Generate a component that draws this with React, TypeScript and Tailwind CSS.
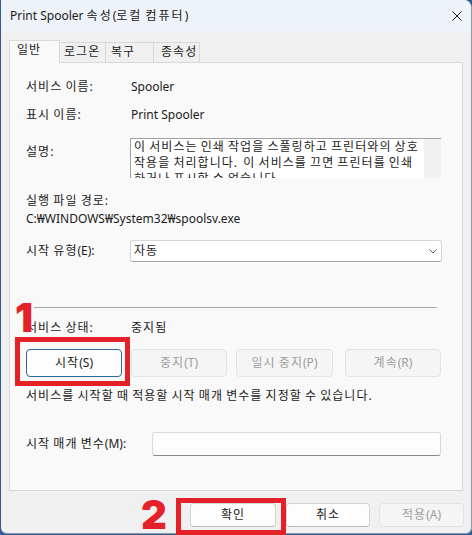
import React from "react";

const HANGUL = /([\uAC00-\uD7A3]+)/;

function K({ t, wide }: { t: string; wide?: boolean }) {
  const parts = t.split(HANGUL);
  return (
    <span>
      {parts.map((p, i) =>
        i % 2 === 1 ? (
          <span key={i} className={wide ? "tracking-[2px]" : "tracking-[1.05px]"}>
            {p}
          </span>
        ) : (
          <React.Fragment key={i}>{p}</React.Fragment>
        )
      )}
    </span>
  );
}

function Btn({ label, w, disabled, focused, className = "" }: { label: string; w: string; disabled?: boolean; focused?: boolean; className?: string }) {
  const base = "flex items-center justify-center rounded-[4px] border h-full whitespace-pre " + w + " " + className;
  let look = " bg-[#fdfdfd] border-[#d3d3d3] border-b-[#bcbcbc] text-[#1b1b1b]";
  if (disabled) look = " bg-[#f5f5f5] border-[#e3e3e3] text-[#9d9d9d]";
  if (focused) look = " bg-[#fdfdfd] border-[#2f6798] text-[#1b1b1b]";
  return (
    <div className={base + look}>
      <K t={label} />
    </div>
  );
}

export default function App() {
  return (
    <div className="relative w-[472px] h-[535px] bg-[#2c5d99] pl-[1px] [font-family:'Noto_Sans','Noto_Sans_CJK_KR',sans-serif] text-[12px] leading-[16px] text-[#1b1b1b]">
      <div className="w-[471px] h-[534px] bg-[#f0f0f0] rounded-tr-[8px] rounded-b-[6px] border-r border-b border-[#8d99aa] overflow-hidden flex flex-col">
        {/* Title bar */}
        <div className="h-[31px] shrink-0 bg-[#eef3f9] flex items-center justify-between pl-[9px] pr-[9px]">
          <span className="text-[#1a1a1a]">
            <K t="Print Spooler 속성(로컬 컴퓨터)" wide />
          </span>
          <svg width="10" height="10" viewBox="0 0 10 10" className="mt-[1px]">
            <path d="M0.5 0.5 L9.5 9.5 M9.5 0.5 L0.5 9.5" stroke="#1a1a1a" strokeWidth="1" fill="none" />
          </svg>
        </div>

        {/* Tabs */}
        <div className="relative z-10 mt-[9px] ml-[8px] flex items-end h-[22px]">
          <div className="h-[23px] -mb-px w-[51px] bg-[#f9f9f9] border-t border-l border-r border-[#d9d9d9] pl-[7px] pt-[1px]"><K t="일반" /></div>
          <div className="h-[20px] w-[46px] border-t border-r border-[#d9d9d9] pl-[4px] pt-[1px]"><K t="로그온" /></div>
          <div className="h-[20px] w-[48px] border-t border-r border-[#d9d9d9] pl-[5px] pt-[1px]"><K t="복구" /></div>
          <div className="h-[20px] w-[46px] border-t border-r border-[#d9d9d9] pl-[7px] pt-[1px]"><K t="종속성" /></div>
        </div>

        {/* Panel */}
        <div className="ml-[8px] w-[454px] h-[429px] shrink-0 bg-[#f9f9f9] border border-[#d9d9d9] pl-[16px] flex flex-col">
          <div className="mt-[16px] flex">
            <div className="w-[105px]"><K t="서비스 이름:" /></div>
            <div>Spooler</div>
          </div>
          <div className="mt-[12px] flex">
            <div className="w-[105px]"><K t="표시 이름:" /></div>
            <div>Print Spooler</div>
          </div>
          <div className="mt-[15px] flex">
            <div className="w-[104px] pt-[6px]"><K t="설명:" /></div>
            <div className="w-[311px] h-[40px] flex border-t border-l border-[#a0a0a0] overflow-hidden">
              <div className="flex-1 bg-white pl-[3px] whitespace-pre overflow-hidden">
                <div><K t="이 서비스는 인쇄 작업을 스풀링하고 프린터와의 상호" /></div>
                <div><K t="작용을 처리합니다.  이 서비스를 끄면 프린터를 인쇄" /></div>
                <div><K t="하거나 표시할 수 없습니다." /></div>
              </div>
              <div className="w-[17px] bg-[#f0f0f0]" />
            </div>
          </div>
          <div className="mt-[15px]"><K t="실행 파일 경로:" /></div>
          <div className="mt-[2px]">C:₩WINDOWS₩System32₩spoolsv.exe</div>
          <div className="mt-[13px] flex items-center h-[22px]">
            <div className="w-[104px]"><K t="시작 유형(E):" /></div>
            <div className="w-[312px] h-[22px] bg-white border border-[#d6d6d6] border-b-[#a8a8a8] rounded-[3px] flex items-center justify-between pl-[3px] pr-[4px]">
              <K t="자동" />
              <svg width="8" height="5" viewBox="0 0 8 5">
                <path d="M0.5 0.5 L4 4 L7.5 0.5" stroke="#555" strokeWidth="1" fill="none" />
              </svg>
            </div>
          </div>
          <div className="mt-[45px] ml-[8px] w-[403px] h-px bg-[#a8a8a8]" />
          <div className="mt-[12px] flex">
            <div className="w-[105px]"><K t="서비스 상태:" /></div>
            <div><K t="중지됨" /></div>
          </div>
          <div className="mt-[13px] flex h-[28px]">
            <Btn label="시작(S)" w="w-[96px]" focused />
            <Btn label="중지(T)" w="w-[96px]" disabled className="ml-[9px]" />
            <Btn label="일시 중지(P)" w="w-[97px]" disabled className="ml-[9px]" />
            <Btn label="계속(R)" w="w-[96px]" disabled className="ml-[12px]" />
          </div>
          <div className="mt-[11px]"><K t="서비스를 시작할 때 적용할 시작 매개 변수를 지정할 수 있습니다." /></div>
          <div className="mt-[28px] flex items-center h-[24px]">
            <div className="w-[126px]"><K t="시작 매개 변수(M):" /></div>
            <div className="w-[289px] h-[24px] bg-[#fdfdfd] border border-[#dadada] border-b-[#8a8a8a] rounded-[3px]" />
          </div>
        </div>

        {/* Bottom buttons */}
        <div className="mt-[12px] flex justify-end pr-[7px] h-[24px]">
          <Btn label="확인" w="w-[86px]" />
          <Btn label="취소" w="w-[84px]" className="ml-[10px]" />
          <Btn label="적용(A)" w="w-[85px]" disabled className="ml-[9px]" />
        </div>
      </div>

      {/* Annotations */}
      <div className="absolute left-[15px] top-[298px] [font-family:'Inter',sans-serif] font-black text-[40px] leading-none text-[#e42029]">1</div>
      <div className="absolute left-[15px] top-[337px] w-[115px] h-[49px] border-[5px] border-[#e42029]" />
      <div className="absolute left-[141px] top-[495px] [font-family:'Inter',sans-serif] font-black text-[40px] leading-none text-[#e42029]">2</div>
      <div className="absolute left-[176px] top-[498px] w-[110px] h-[37px] border-[5px] border-[#e42029]" />
    </div>
  );
}
